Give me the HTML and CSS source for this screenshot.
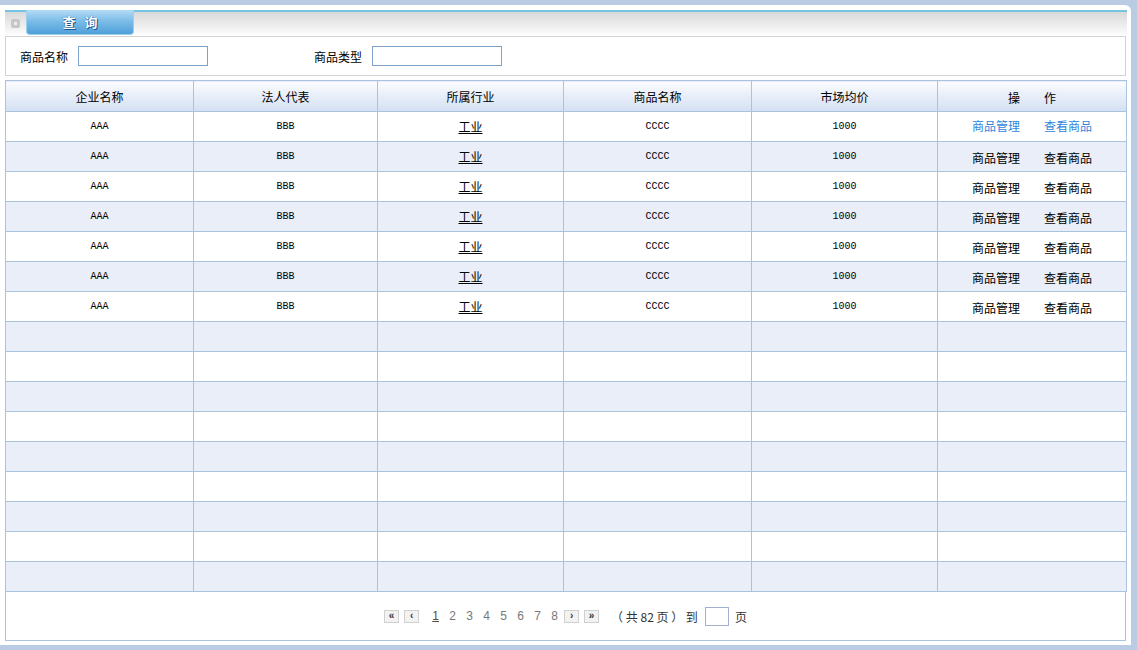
FILE: index.html
```html
<!DOCTYPE html>
<html lang="zh-CN">
<head>
<meta charset="utf-8">
<title>查询</title>
<link rel="stylesheet" href="styles.css">
</head>
<body>
<div class="panel">
  <div class="titlebar">
    <span class="tb-icon"><span></span></span>
    <div class="tab">查&nbsp;&nbsp;&nbsp;询</div>
  </div>
  <div class="search">
    <label class="lbl">商品名称</label><input class="inp" type="text">
    <label class="lbl lbl2">商品类型</label><input class="inp" type="text">
  </div>
  <table class="grid">
    <colgroup>
      <col class="c1"><col class="c2"><col class="c3"><col class="c4"><col class="c5"><col class="c6">
    </colgroup>
    <thead>
      <tr><th>企业名称</th><th>法人代表</th><th>所属行业</th><th>商品名称</th><th>市场均价</th><th><span class="opsh">操<span class="gap"></span>作</span></th></tr>
    </thead>
    <tbody>
      <tr><td class="lat">AAA</td><td class="lat">BBB</td><td><a class="ind">工业</a></td><td class="lat">CCCC</td><td class="lat">1000</td><td class="ops blue"><span>商品管理</span><span>查看商品</span></td></tr>
      <tr class="alt"><td class="lat">AAA</td><td class="lat">BBB</td><td><a class="ind">工业</a></td><td class="lat">CCCC</td><td class="lat">1000</td><td class="ops"><span>商品管理</span><span>查看商品</span></td></tr>
      <tr><td class="lat">AAA</td><td class="lat">BBB</td><td><a class="ind">工业</a></td><td class="lat">CCCC</td><td class="lat">1000</td><td class="ops"><span>商品管理</span><span>查看商品</span></td></tr>
      <tr class="alt"><td class="lat">AAA</td><td class="lat">BBB</td><td><a class="ind">工业</a></td><td class="lat">CCCC</td><td class="lat">1000</td><td class="ops"><span>商品管理</span><span>查看商品</span></td></tr>
      <tr><td class="lat">AAA</td><td class="lat">BBB</td><td><a class="ind">工业</a></td><td class="lat">CCCC</td><td class="lat">1000</td><td class="ops"><span>商品管理</span><span>查看商品</span></td></tr>
      <tr class="alt"><td class="lat">AAA</td><td class="lat">BBB</td><td><a class="ind">工业</a></td><td class="lat">CCCC</td><td class="lat">1000</td><td class="ops"><span>商品管理</span><span>查看商品</span></td></tr>
      <tr><td class="lat">AAA</td><td class="lat">BBB</td><td><a class="ind">工业</a></td><td class="lat">CCCC</td><td class="lat">1000</td><td class="ops"><span>商品管理</span><span>查看商品</span></td></tr>
      <tr class="alt"><td></td><td></td><td></td><td></td><td></td><td></td></tr>
      <tr><td></td><td></td><td></td><td></td><td></td><td></td></tr>
      <tr class="alt"><td></td><td></td><td></td><td></td><td></td><td></td></tr>
      <tr><td></td><td></td><td></td><td></td><td></td><td></td></tr>
      <tr class="alt"><td></td><td></td><td></td><td></td><td></td><td></td></tr>
      <tr><td></td><td></td><td></td><td></td><td></td><td></td></tr>
      <tr class="alt"><td></td><td></td><td></td><td></td><td></td><td></td></tr>
      <tr><td></td><td></td><td></td><td></td><td></td><td></td></tr>
      <tr class="alt"><td></td><td></td><td></td><td></td><td></td><td></td></tr>
    </tbody>
  </table>
  <div class="pager">
    <span class="pbtn">&laquo;</span>
    <span class="pbtn">&lsaquo;</span>
    <span class="pn cur">1</span>
    <span class="pn">2</span>
    <span class="pn">3</span>
    <span class="pn">4</span>
    <span class="pn">5</span>
    <span class="pn">6</span>
    <span class="pn">7</span>
    <span class="pn">8</span>
    <span class="pbtn next">&rsaquo;</span>
    <span class="pbtn">&raquo;</span>
    <span class="ptxt">（ 共 82 页 ） 到</span>
    <input class="pinp" type="text">
    <span class="ptxt last">页</span>
  </div>
</div>
</body>
</html>
```

FILE: styles.css
```css
html, body {
  margin: 0;
  padding: 0;
  background: #b9cce4;
  height: 650px;
  overflow: hidden;
}
body {
  font-family: "Noto Sans CJK SC", "Liberation Sans", sans-serif;
  font-size: 12px;
  color: #000;
}
.panel {
  margin-top: 5px;
  width: 1126px;
  height: 640px;
  padding-left: 5px;
  background: #fff;
  border-top-right-radius: 6px;
  display: flex;
  flex-direction: column;
}
.titlebar {
  margin-top: 5px;
  width: 1122px;
  height: 24px;
  border-top: 2px solid #76c5e0;
  background: linear-gradient(#d9d9d9, #f6f6f6 80%, #ffffff);
  display: flex;
  align-items: flex-start;
}
.tb-icon {
  width: 9px;
  height: 9px;
  margin: 7px 0 0 6px;
  background: #c7c7c7;
  border-radius: 2px;
  display: flex;
  align-items: center;
  justify-content: center;
}
.tb-icon span {
  width: 3px;
  height: 3px;
  background: #eee;
}
.tab {
  margin-left: 6px;
  margin-top: -2px;
  width: 106px;
  height: 24px;
  border: 1px solid #9dd0ec;
  border-top: none;
  border-radius: 0 0 4px 4px;
  background: linear-gradient(#b6dcf4, #7cbde8 45%, #4e9fd9);
  color: #fff;
  font-weight: bold;
  font-size: 13px;
  line-height: 24px;
  text-align: center;
  text-shadow: 0 0 1px #0d4d8a, 1px 1px 0 #1a5a96;
}
.search {
  width: 1119px;
  height: 38px;
  border: 1px solid #d2d2d2;
  display: flex;
  align-items: center;
}
.lbl {
  margin-left: 14px;
  margin-right: 10px;
}
.lbl2 {
  margin-left: 106px;
}
.inp {
  width: 128px;
  height: 18px;
  padding: 0;
  border: 1px solid #7fa1c9;
  margin: 0;
  box-sizing: content-box;
}
.grid {
  margin-top: 4px;
  width: 1121px;
  border-collapse: collapse;
  table-layout: fixed;
  border: 1px solid #a9c3dc;
}
.c1 { width: 188px; }
.c2 { width: 184px; }
.c3 { width: 186px; }
.c4 { width: 188px; }
.c5 { width: 186px; }
.c6 { width: 189px; }
.grid th, .grid td {
  border: 1px solid #a9c3dc;
  text-align: center;
  padding: 0;
  height: 29px;
  font-weight: normal;
}
.grid th {
  height: 30px;
  background: linear-gradient(#fbfcfe, #d3e0f3);
  font-size: 12px;
}
.opsh {
  position: relative;
  top: 1px;
}
.gap {
  display: inline-block;
  width: 24px;
}
.grid tr.alt td { background: #e9eef8; }
.lat {
  font-family: "Liberation Mono", monospace;
  font-size: 10px;
}
.ind {
  text-decoration: underline;
  color: #000;
}
.ops span {
  display: inline-block;
  margin: 0 12px;
  position: relative;
  top: 1px;
}
.ops.blue span { color: #2f86dd; top: -1px; }
.pager {
  width: 1119px;
  height: 48px;
  border: 1px solid #a9c3dc;
  border-top: none;
  display: flex;
  align-items: center;
  justify-content: center;
  color: #666;
}
.pbtn {
  width: 13px;
  height: 11px;
  border: 1px solid #d0d0d0;
  background: #f2f2f2;
  font-family: "Liberation Sans", sans-serif;
  font-size: 10px;
  font-weight: bold;
  line-height: 10px;
  text-align: center;
  color: #333;
  margin-right: 5px;
}
.pn {
  font-family: "Liberation Sans", sans-serif;
  font-size: 12px;
  width: 7px;
  margin: 0 5px;
  color: #777;
  text-align: center;
}
.pn.cur {
  color: #5a4a3a;
  text-decoration: underline;
  margin-left: 8px;
}
.pbtn.next { margin-left: 1px; }
.ptxt {
  margin-left: 7px;
  color: #333;
}
.pinp {
  width: 22px;
  height: 17px;
  border: 1px solid #a0b0d0;
  padding: 0;
  margin-left: 7px;
}
.ptxt.last { margin-left: 6px; }
```
